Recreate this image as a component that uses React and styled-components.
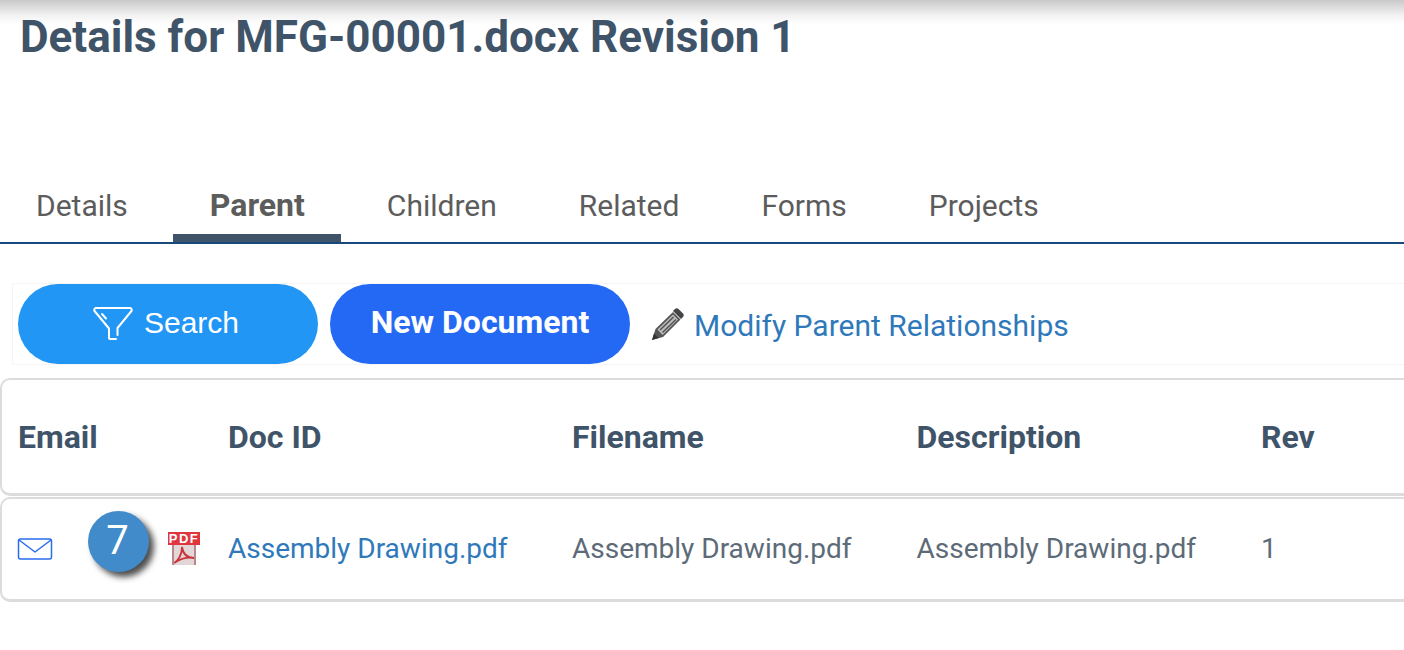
import React from 'react'
import styled, { createGlobalStyle } from 'styled-components'

const GlobalStyle = createGlobalStyle`
  html, body {
    margin: 0;
    padding: 0;
    background: #fff;
    overflow: hidden;
  }
  body {
    font-family: Roboto, 'Liberation Sans', sans-serif;
  }
`

const tabs = ['Details', 'Parent', 'Children', 'Related', 'Forms', 'Projects']

const FilterIcon = () => (
  <svg width="40" height="36" viewBox="0 0 40 36" fill="none" stroke="#fff" strokeWidth="2" strokeLinecap="round" strokeLinejoin="round">
    <path d="M3 2h34a2 2 0 0 1 1.500 3L24.500 22v7" />
    <path d="M3 2a2 2 0 0 0-1.500 3L16 22.500V32a1 1 0 0 0 1 1h6" />
    <path d="M9 8l4 4.500" />
  </svg>
)

const PencilIcon = () => (
  <svg width="34" height="34" viewBox="0 0 34 34">
    <path d="M1 33l3.500-11L22 5l7.500 7.500L12 30z" fill="#555" />
    <path d="M6.500 22.500L22 7.500l5 5L11.500 28z" fill="#bbb" />
    <path d="M9 23L22.500 10M11.500 25.500L25 12.500" stroke="#555" strokeWidth="1.500" />
    <path d="M22 4l2-2a2.500 2.500 0 0 1 3.500 0l4.500 4.500a2.500 2.500 0 0 1 0 3.500l-2 2z" fill="#444" />
    <path d="M1 33l2-6.500L7.500 31z" fill="#333" />
  </svg>
)

const MailIcon = () => (
  <MailSvg width="36" height="24" viewBox="0 0 36 24" fill="none" stroke="#2a6cf0" strokeWidth="1.500" strokeLinejoin="round">
    <rect x="1.500" y="2" width="33" height="20" rx="2" />
    <path d="M2 3l16 12L34 3" />
  </MailSvg>
)

const PdfIcon = () => (
  <PdfBox>
    <PdfLabel>PDF</PdfLabel>
    <PdfPage>
      <svg width="24" height="20" viewBox="0 0 24 20" fill="none" stroke="#c8343c" strokeWidth="1.800">
        <path d="M2 18c4-2 8-8 8-16 1 7 5 11 12 11-6-1-14 1-20 5z" />
      </svg>
    </PdfPage>
  </PdfBox>
)

export default function App() {
  return (
    <Page>
      <GlobalStyle />
      <TopShade />
      <Title>Details for MFG-00001.docx Revision 1</Title>
      <TabBar>
        {tabs.map((tab) => (
          <Tab key={tab} $active={tab === 'Parent'}>{tab}</Tab>
        ))}
      </TabBar>
      <Toolbar>
        <SearchButton>
          <FilterIcon />
          <span>Search</span>
        </SearchButton>
        <NewButton>New Document</NewButton>
        <ModifyLink href="#">
          <PencilIcon />
          <span>Modify Parent Relationships</span>
        </ModifyLink>
      </Toolbar>
      <HeaderCard>
        <EmailCell><HeadText>Email</HeadText></EmailCell>
        <IdCell><HeadText>Doc ID</HeadText></IdCell>
        <TextCell><HeadText>Filename</HeadText></TextCell>
        <TextCell><HeadText>Description</HeadText></TextCell>
        <RevCell><HeadText>Rev</HeadText></RevCell>
      </HeaderCard>
      <RowCard>
        <EmailCell>
          <MailIcon />
          <Badge>7</Badge>
          <PdfIcon />
        </EmailCell>
        <IdCell><DocLink href="#">Assembly Drawing.pdf</DocLink></IdCell>
        <TextCell>Assembly Drawing.pdf</TextCell>
        <TextCell>Assembly Drawing.pdf</TextCell>
        <RevCell>1</RevCell>
      </RowCard>
    </Page>
  )
}

const Page = styled.div`
  position: relative;
  width: 1404px;
  height: 650px;
  overflow: hidden;
  background: #fff;
`

const TopShade = styled.div`
  position: absolute;
  top: 0;
  left: 0;
  right: 0;
  height: 24px;
  background: linear-gradient(#c9c9c9, #f0f0f0 60%, #fff);
`

const Title = styled.h1`
  position: relative;
  margin: 0;
  padding: 13px 0 0 20px;
  height: 48px;
  font-size: 44px;
  line-height: 48px;
  font-weight: 700;
  color: #3f5469;
`

const TabBar = styled.div`
  display: flex;
  gap: 9px;
  height: 61px;
  margin: 120px 0 0 -0.5px;
  border-bottom: 2px solid #17497c;
`

const Tab = styled.div`
  display: flex;
  align-items: center;
  justify-content: center;
  box-sizing: border-box;
  padding: 0 36.500px ${(p) => (p.$active ? '6px' : '4px')};
  font-size: ${(p) => (p.$active ? '32px' : '30px')};
  font-weight: ${(p) => (p.$active ? 700 : 400)};
  color: #5c5c5c;
  border-bottom: 8px solid ${(p) => (p.$active ? '#3f5469' : 'transparent')};
`

const Toolbar = styled.div`
  display: flex;
  align-items: center;
  gap: 12px;
  margin: 39px 0 0 12px;
  height: 82px;
  padding-left: 5px;
  border: 1px solid #f5f5f5;
  border-right: none;
  box-sizing: border-box;
`

const PillButton = styled.button`
  display: flex;
  align-items: center;
  justify-content: center;
  width: 300px;
  height: 80px;
  border: none;
  border-radius: 40px;
  color: #fff;
  font-family: inherit;
`

const SearchButton = styled(PillButton)`
  background: #2196f5;
  gap: 11px;
  padding: 0 4px 0 0;
  font-size: 30px;
  font-family: 'Liberation Sans', sans-serif;
  span {
    padding-bottom: 2px;
  }
`

const NewButton = styled(PillButton)`
  background: #2469f4;
  font-size: 32px;
  font-weight: 700;
  padding: 0 0 4px;
`

const ModifyLink = styled.a`
  display: flex;
  align-items: center;
  gap: 9px;
  margin-left: 9px;
  font-size: 30px;
  color: #2f79bb;
  text-decoration: none;
  span {
    padding-top: 2px;
  }
`

const cardBase = `
  display: flex;
  align-items: center;
  box-sizing: border-box;
  width: 1420px;
  background: #fff;
  border: 2px solid #dcdcdc;
  border-bottom-width: 3px;
  border-radius: 10px;
  font-size: 28px;
  color: #5d6b78;
`

const HeaderCard = styled.div`
  ${cardBase}
  height: 118px;
  margin-top: 13px;
`

const RowCard = styled.div`
  ${cardBase}
  height: 105px;
  padding-bottom: 2px;
  margin-top: 1px;
`

const EmailCell = styled.div`
  position: relative;
  display: flex;
  align-items: center;
  width: 227px;
  margin-right: -1px;
  padding-left: 16px;
  box-sizing: border-box;
  flex: none;
`

const MailSvg = styled.svg`
  margin: 2px 0 0 -1px;
`

const IdCell = styled.div`
  width: 344px;
  flex: none;
`

const TextCell = styled.div`
  width: 344.500px;
  flex: none;
`

const RevCell = styled.div`
  flex: none;
`

const HeadText = styled.span`
  font-size: 32px;
  font-weight: 700;
  color: #3f5469;
`

const DocLink = styled.a`
  color: #2f79bb;
  text-decoration: none;
`

const Badge = styled.div`
  position: absolute;
  left: 86px;
  top: -24px;
  width: 61px;
  height: 61px;
  display: flex;
  align-items: center;
  justify-content: center;
  border-radius: 50%;
  background: #428bca;
  color: #fff;
  font-size: 40px;
  font-family: Roboto, sans-serif;
  padding: 0 2px 3px 0;
  box-sizing: border-box;
  box-shadow: 5px 5px 6px #4d4d4d;
`

const PdfBox = styled.div`
  position: absolute;
  left: 166px;
  top: -3px;
  width: 32px;
  height: 33px;
  display: flex;
  flex-direction: column;
  align-items: center;
`

const PdfLabel = styled.div`
  width: 32px;
  height: 13px;
  background: #e0353f;
  color: #fff;
  font-size: 13px;
  line-height: 13px;
  font-weight: 700;
  letter-spacing: 1.500px;
  text-align: center;
  font-family: 'Liberation Sans', sans-serif;
`

const PdfPage = styled.div`
  width: 24px;
  height: 20px;
  background: #e2d6d6;
  border-left: 2px solid #b9878b;
  border-right: 2px solid #b9878b;
  box-sizing: border-box;
  overflow: hidden;
  svg {
    display: block;
    margin-left: -2px;
  }
`
